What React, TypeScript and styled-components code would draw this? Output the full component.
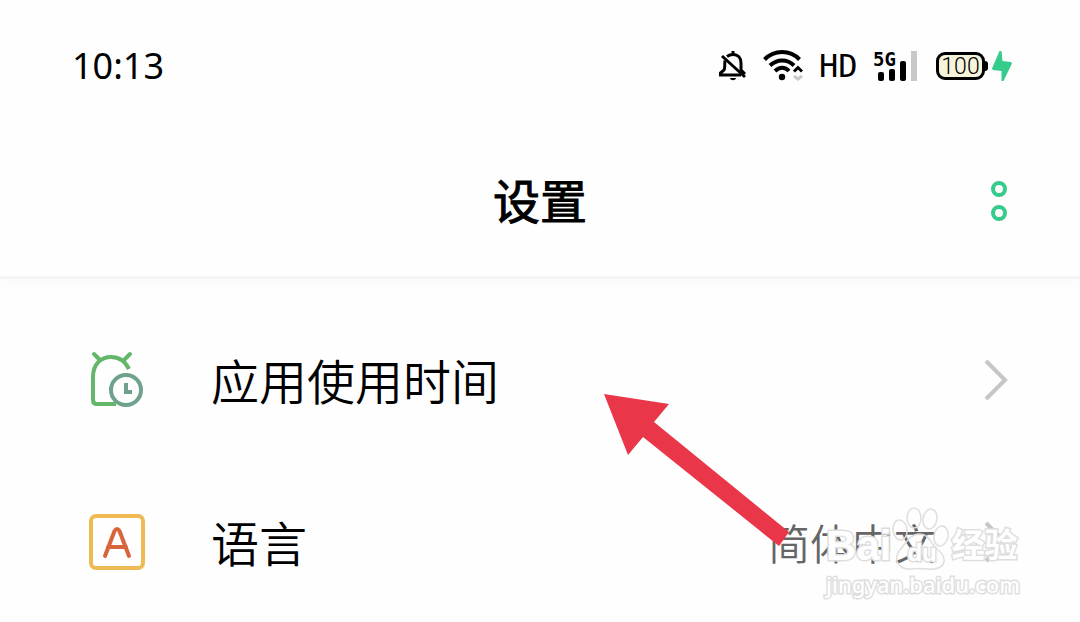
import React from "react";
import styled, { createGlobalStyle } from "styled-components";

const GlobalStyle = createGlobalStyle`
  * { box-sizing: border-box; }
  body {
    margin: 0;
    background: #fefefe;
    color: #000;
    font-family: "Noto Sans CJK SC", "Noto Sans", sans-serif;
  }
`;

const Page = styled.div`
  min-height: 100vh;
  overflow: hidden;
`;

const StatusBar = styled.div`
  display: flex;
  align-items: center;
  justify-content: space-between;
  height: 132px;
  padding: 0 68px 0 72px;
`;

const Clock = styled.time`
  font-family: "Noto Sans", sans-serif;
  font-size: 36px;
  line-height: 40px;
`;

const StatusIcons = styled.div`
  display: flex;
  align-items: center;
  gap: 16px;
`;

const Hd = styled.span`
  width: 38px;
  font-family: "DejaVu Sans Mono", monospace;
  font-size: 32px;
  line-height: 40px;
`;

const Signal = styled.div`
  position: relative;
  display: flex;
  align-items: flex-end;
  justify-content: flex-end;
  gap: 5px;
  width: 44px;
  height: 30px;
`;

const Bar = styled.i<{ $height: number; $off?: boolean }>`
  width: 6px;
  height: ${(p) => p.$height}px;
  border-radius: ${(p) => (p.$off ? 0 : 2)}px;
  background: ${(p) => (p.$off ? "#c8c8c8" : "#000")};
`;

const Network = styled.span`
  position: absolute;
  top: -2px;
  left: 0;
  font-family: "DejaVu Sans Mono", monospace;
  font-size: 19px;
  font-weight: 700;
  line-height: 20px;
`;

const Power = styled.div`
  display: flex;
  align-items: center;
  margin-left: 3px;
`;

const Battery = styled.span`
  width: 49px;
  height: 28px;
  border: 3px solid #000;
  border-radius: 9px;
  background: #f7f4dc;
  font-family: "Roboto", sans-serif;
  font-size: 23px;
  font-weight: 300;
  line-height: 24px;
  text-align: center;
`;

const BatteryTip = styled.i`
  width: 3px;
  height: 10px;
  margin-right: 4px;
  border-radius: 0 3px 3px 0;
  background: #000;
`;

const Header = styled.header`
  display: grid;
  grid-template-columns: 1fr auto 1fr;
  align-items: center;
  height: 147px;
  padding: 0 68px 6px;
  border-bottom: 3px solid #f5f5f5;
  box-shadow: 0 6px 8px #fbfbfb;
`;

const Title = styled.h1`
  grid-column: 2;
  margin: 0;
  padding-bottom: 4px;
  font-size: 47px;
  font-weight: 400;
  line-height: 64px;
  -webkit-text-stroke: 1px #000;
`;

const MenuButton = styled.button`
  display: grid;
  gap: 8px;
  justify-self: end;
  padding: 0 5px;
  border: 0;
  background: none;
`;

const Ring = styled.i`
  width: 16px;
  height: 16px;
  border: 4px solid #34cb8b;
  border-radius: 50%;
`;

const Main = styled.main`
  position: relative;
  padding-top: 20px;
`;

const List = styled.ul`
  margin: 0;
  padding: 0;
  list-style: none;
`;

const Row = styled.button`
  display: flex;
  align-items: center;
  width: 100%;
  height: 162px;
  padding: 0 72px 0 88px;
  border: 0;
  background: none;
  color: inherit;
  font: inherit;
  text-align: left;
`;

const Label = styled.span`
  flex: 1;
  margin-left: 65px;
  padding-bottom: 3px;
  font-size: 48px;
  font-weight: 350;
  line-height: 64px;
`;

const Value = styled.span`
  margin-right: 48px;
  color: #666;
  font-size: 42px;
  font-weight: 350;
  line-height: 56px;
`;

const Arrow = styled.svg`
  position: absolute;
  top: 115px;
  right: 291px;
  pointer-events: none;
`;

const Watermark = styled.div`
  position: absolute;
  top: 227px;
  right: 60px;
  color: #fff;
  font-family: "Liberation Sans", "Noto Sans CJK SC", sans-serif;
  paint-order: stroke fill;
  -webkit-text-stroke: 3px #dedede;
  pointer-events: none;
`;

const Brand = styled.div`
  display: flex;
  align-items: flex-end;
  height: 64px;
  font-size: 42px;
  font-weight: 700;
  line-height: 48px;
`;

const Paw = styled.span`
  position: relative;
  width: 60px;
  height: 64px;
`;

const Du = styled.span`
  position: absolute;
  top: 35px;
  left: 16px;
  font-size: 24px;
  line-height: 24px;
`;

const Experience = styled.span`
  font-size: 33px;
`;

const Site = styled.div`
  font-family: "Noto Sans", sans-serif;
  font-size: 22px;
  font-weight: 500;
  line-height: 28px;
`;

const BellOff = () => (
  <svg width="28" height="32" viewBox="0 0 28 32" fill="none" stroke="#000" strokeWidth="3">
    <path d="M3 6 26 27" />
    <path d="M8 6.500C10 5 12 4.400 14 4.400c5 0 8 3.600 8 8.600v7l4 4" />
    <path d="M6 10.500c-.6 4 .3 7.500-1 9.500l-3.500 3v2H22" />
    <path d="M14 1v4" />
    <path d="M11 28h6c-.5 3-5.500 3-6 0Z" fill="#000" stroke="none" />
  </svg>
);

const Wifi = () => (
  <svg width="40" height="32" viewBox="0 0 40 32" fill="none" stroke="#000" strokeWidth="4">
    <path d="M1.500 9.500C11.500-.4 27-.4 36.500 9.500" />
    <path d="M7 15.500c7-6.800 17.500-6.800 24 0" />
    <path d="M12 21c4.400-4.300 10-4.300 14 0" />
    <circle cx="19" cy="27" r="3.200" fill="#000" stroke="none" />
    <path d="m31 21.500 4-4 4 4" strokeWidth="3" />
    <path d="m31 26 4 3 4-3" stroke="#c9c9c9" strokeWidth="3" />
  </svg>
);

const Bolt = () => (
  <svg width="20" height="32" viewBox="0 0 20 32">
    <path d="M7.500 1H9.500L10.500 11 19 12 20 13.500 11.500 31H9.500V21L1 20 0 18.500Z" fill="#34cb8b" />
  </svg>
);

const AppTimeIcon = () => (
  <svg width="58" height="58" viewBox="0 0 58 58" fill="none" strokeWidth="4" strokeLinecap="round">
    <path d="M28 53H9q-4 0-4-4V26C5 13 13 6 23 6c8 0 14 4 18 12" stroke="#63b66a" strokeLinecap="butt" />
    <path d="m6 3 6 6M42 3l-6 6" stroke="#63b66a" />
    <circle cx="38" cy="39" r="15" stroke="#6fa28c" />
    <path d="M38 32v9h6" stroke="#6fa28c" strokeLinecap="butt" />
  </svg>
);

const LanguageIcon = () => (
  <svg width="58" height="58" viewBox="0 0 58 58" fill="none" strokeLinecap="round" strokeLinejoin="round">
    <rect x="3" y="3" width="52" height="52" rx="5" stroke="#efb954" strokeWidth="4" />
    <path d="M17 43 26.500 18q2.500-4 5 0L41 43M20 34h18" stroke="#d9643c" strokeWidth="4" />
  </svg>
);

const Chevron = () => (
  <svg width="24" height="42" viewBox="0 0 24 42" fill="none" stroke="#c6c6c6" strokeWidth="4">
    <path d="m2 2 19 19L2 40" />
  </svg>
);

const PawPrint = () => (
  <svg width="60" height="64" viewBox="0 0 60 64" fill="none" stroke="#dedede" strokeWidth="1.500">
    <ellipse cx="9" cy="24" rx="7" ry="10" transform="rotate(-8 9 24)" />
    <ellipse cx="23" cy="12" rx="7" ry="10" />
    <ellipse cx="39" cy="13" rx="7" ry="10" transform="rotate(10 39 13)" />
    <ellipse cx="50" cy="30" rx="7" ry="10" transform="rotate(12 50 30)" />
    <path d="M29 28c9 0 10 9 17 15 9 7 11 18-3 20-9 1-15-2-23 0-12 1-18-9-12-18 7-7 10-17 21-17Z" />
  </svg>
);

const settings = [
  { label: "应用使用时间", icon: <AppTimeIcon /> },
  { label: "语言", icon: <LanguageIcon />, value: "简体中文" },
];

export default function App() {
  return (
    <Page>
      <GlobalStyle />
      <StatusBar>
        <Clock>10:13</Clock>
        <StatusIcons>
          <BellOff />
          <Wifi />
          <Hd>HD</Hd>
          <Signal>
            <Network>5G</Network>
            <Bar $height={9} />
            <Bar $height={12} />
            <Bar $height={20} />
            <Bar $height={30} $off />
          </Signal>
          <Power>
            <Battery>100</Battery>
            <BatteryTip />
            <Bolt />
          </Power>
        </StatusIcons>
      </StatusBar>
      <Header>
        <Title>设置</Title>
        <MenuButton aria-label="更多">
          <Ring />
          <Ring />
        </MenuButton>
      </Header>
      <Main>
        <List>
          {settings.map((item) => (
            <li key={item.label}>
              <Row>
                {item.icon}
                <Label>{item.label}</Label>
                {item.value && <Value>{item.value}</Value>}
                <Chevron />
              </Row>
            </li>
          ))}
        </List>
        <Arrow width="185" height="152" viewBox="0 0 185 152">
          <path d="M0 0 65 10 50 28 185 138 175 152 39 43 24 61Z" fill="#e93649" />
        </Arrow>
        <Watermark>
          <Brand>
            <span>Bai</span>
            <Paw>
              <PawPrint />
              <Du>du</Du>
            </Paw>
            <Experience>经验</Experience>
          </Brand>
          <Site>jingyan.baidu.com</Site>
        </Watermark>
      </Main>
    </Page>
  );
}
